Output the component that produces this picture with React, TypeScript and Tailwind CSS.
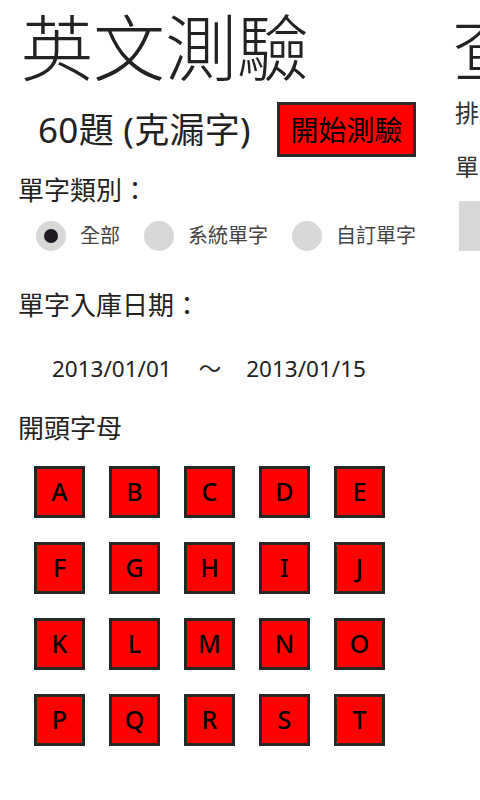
import React from "react";

const font = { fontFamily: '"Noto Sans", "Noto Sans CJK TC", sans-serif' };

const letters = ["A", "B", "C", "D", "E", "F", "G", "H", "I", "J", "K", "L", "M", "N", "O", "P", "Q", "R", "S", "T"];

const Radio = ({ label, checked }: { label: string; checked?: boolean }) => (
    <div className="flex items-center">
        <div className="w-[30px] h-[30px] rounded-full bg-[#d6d9d6] flex items-center justify-center">
            {checked && <div className="w-[14px] h-[14px] rounded-full bg-[#1f1a22]" />}
        </div>
        <span className="ml-[14px] text-[20px] leading-none text-[#444]">{label}</span>
    </div>
);

export default function App() {
    return (
        <div className="w-[480px] h-[800px] overflow-hidden bg-white flex text-[#222]" style={font}>
            <div className="w-[455px] shrink-0 pl-[18px]">
                <div className="ml-[3px] mt-[11px] text-[72px] leading-none font-light">英文測驗</div>
                <div className="flex items-center mt-[19px]">
                    <span className="ml-[20px] text-[35px] leading-none tracking-[0.3px]">60題 (克漏字)</span>
                    <button className="ml-auto mr-[39px] w-[139px] h-[55px] border-[3px] border-[#2b2b2b] bg-[#ff0000] text-[28px] leading-none text-black">
                        開始測驗
                    </button>
                </div>
                <div className="mt-[20px] text-[26px] leading-none">單字類別：</div>
                <div className="flex items-center mt-[18px] ml-[18px] gap-[24px]">
                    <Radio label="全部" checked />
                    <Radio label="系統單字" />
                    <Radio label="自訂單字" />
                </div>
                <div className="mt-[41px] text-[26px] leading-none">單字入庫日期：</div>
                <div className="flex items-center mt-[40px] ml-[34px] text-[22.5px] leading-none">
                    <span>2013/01/01</span>
                    <span className="ml-[27px]">～</span>
                    <span className="ml-[25px]">2013/01/15</span>
                </div>
                <div className="mt-[34px] text-[26px] leading-none">開頭字母</div>
                <div className="grid grid-cols-5 w-[351px] gap-x-[24px] gap-y-[24px] mt-[25px] ml-[16px]">
                    {letters.map((l) => (
                        <div
                            key={l}
                            className="w-[51px] h-[52px] border-[3px] border-[#262626] bg-[#ff0000] flex items-center justify-center text-[25px] font-medium text-black"
                        >
                            {l}
                        </div>
                    ))}
                </div>
            </div>
            <div className="shrink-0 w-[200px]">
                <div className="mt-[11px] ml-[-3px] text-[72px] leading-none font-light">查詢</div>
                <div className="mt-[18px] text-[24px] leading-none text-[#333]">排序方式</div>
                <div className="mt-[30px] text-[24px] leading-none text-[#333]">單字類別</div>
                <div className="mt-[22px] ml-[4px] w-[150px] h-[50px] bg-[#d6d9d6]" />
            </div>
        </div>
    );
}
